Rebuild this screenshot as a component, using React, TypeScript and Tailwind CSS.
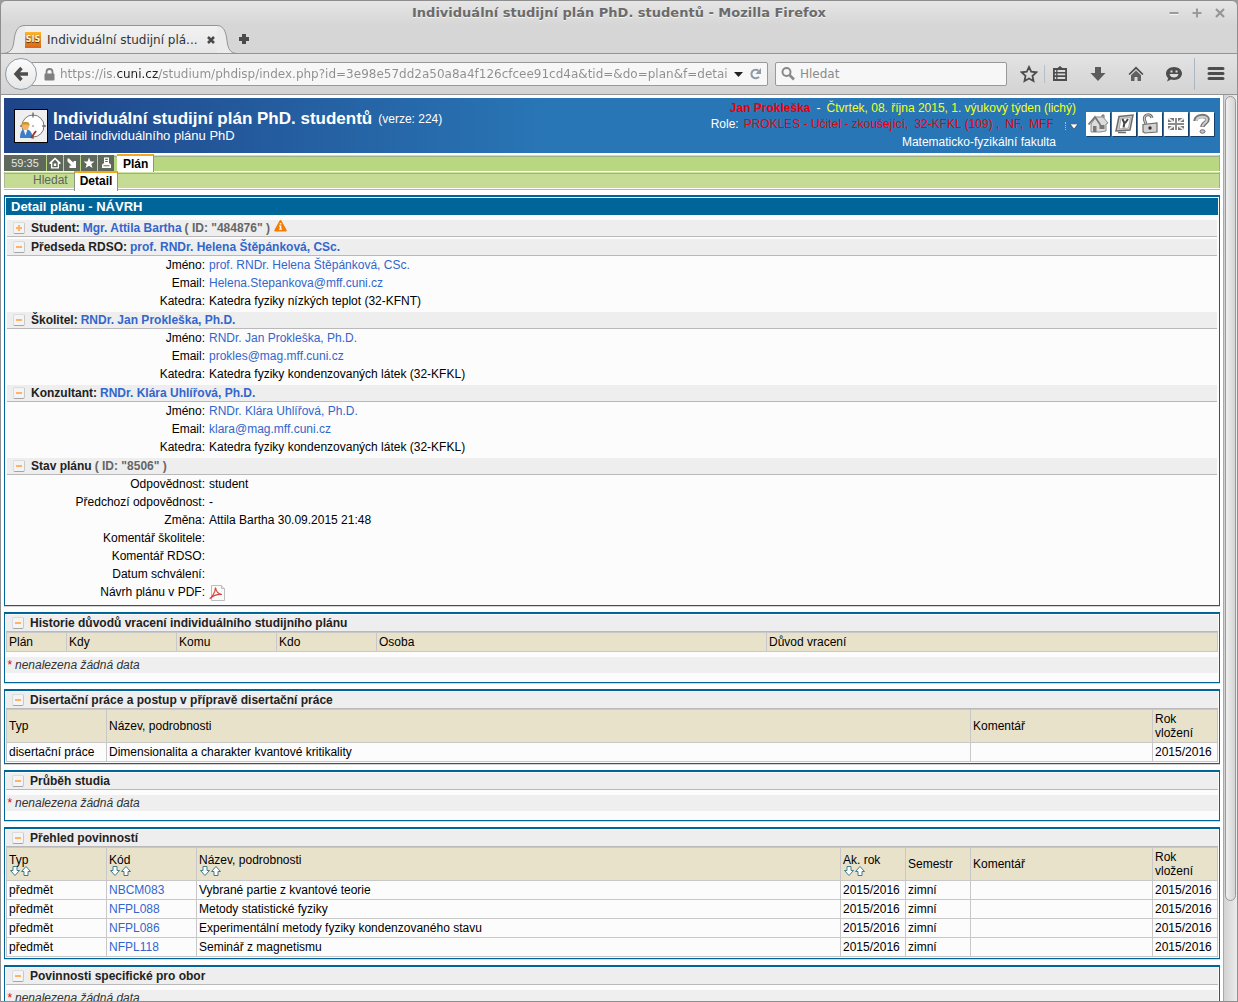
import type { ReactNode } from "react";

type Person = { role: string; name: string; email: string; department: string };

const people: Person[] = [
  { role: "Předseda RDSO:", name: "prof. RNDr. Helena Štěpánková, CSc.", email: "Helena.Stepankova@mff.cuni.cz", department: "Katedra fyziky nízkých teplot (32-KFNT)" },
  { role: "Školitel:", name: "RNDr. Jan Prokleška, Ph.D.", email: "prokles@mag.mff.cuni.cz", department: "Katedra fyziky kondenzovaných látek (32-KFKL)" },
  { role: "Konzultant:", name: "RNDr. Klára Uhlířová, Ph.D.", email: "klara@mag.mff.cuni.cz", department: "Katedra fyziky kondenzovaných látek (32-KFKL)" },
];

const duties = [
  { code: "NBCM083", title: "Vybrané partie z kvantové teorie" },
  { code: "NFPL088", title: "Metody statistické fyziky" },
  { code: "NFPL086", title: "Experimentální metody fyziky kondenzovaného stavu" },
  { code: "NFPL118", title: "Seminář z magnetismu" },
];

const pageUrl = "https://is.cuni.cz/studium/phdisp/index.php?id=3e98e57dd2a50a8a4f126cfcee91cd4a&tid=&do=plan&f=detail";

/* ---------- browser window ---------- */

function TitleBar() {
  return (
    <div className="grid h-6 grid-cols-[1fr_auto_1fr] items-center text-[13px] font-bold text-[#6b6b6b]">
      <span />
      <span className="[text-shadow:0_1px_0_#f4f4f4]">Individuální studijní plán PhD. studentů - Mozilla Firefox</span>
      <div className="flex justify-end gap-[9px] pr-[10px]">
        <button type="button" aria-label="Minimalizovat">
          <svg width="14" height="14" viewBox="0 0 14 14"><path d="M2.5 8h9" stroke="#f5f5f5" strokeWidth="2" /><path d="M2.5 7h9" stroke="#9a9a9a" strokeWidth="2" /></svg>
        </button>
        <button type="button" aria-label="Maximalizovat">
          <svg width="14" height="14" viewBox="0 0 14 14"><path d="M2.5 7h9M7 2.5v9" stroke="#9a9a9a" strokeWidth="2" /></svg>
        </button>
        <button type="button" aria-label="Zavřít okno">
          <svg width="14" height="14" viewBox="0 0 14 14"><path d="M3 3l8 8M11 3l-8 8" stroke="#969696" strokeWidth="2.2" /></svg>
        </button>
      </div>
    </div>
  );
}

function TabStrip() {
  return (
    <div className="flex h-7 items-stretch">
      <svg className="-mb-px h-[29px] shrink-0" width="24" height="29" viewBox="0 0 24 29">
        <path d="M0 28.5C8 28.5 11 26 12.5 19L13.5 12C15 4 18 .5 24 .5V29H0z" fill="#ebebeb" />
        <path d="M0 28.5C8 28.5 11 26 12.5 19L13.5 12C15 4 18 .5 24 .5" fill="none" stroke="#949494" />
      </svg>
      <div className="-mb-px flex w-48 items-center border-t border-[#949494] bg-linear-to-b from-[#f2f2f2] to-[#e6e6e6]">
        <span className="flex size-4 items-center justify-center bg-linear-to-b from-[#fdb42a] to-[#d9641a] text-[8px] font-bold text-[#fff3d0] [text-shadow:0_1px_1px_#5a2a08]">SIS</span>
        <span className="ml-[6px] text-[12px] whitespace-nowrap text-[#2e3436]">Individuální studijní plá...</span>
        <button type="button" aria-label="Zavřít panel" className="mr-px ml-auto">
          <svg width="10" height="10" viewBox="0 0 10 10"><path d="M2 2l6 6M8 2l-6 6" stroke="#4a4a4a" strokeWidth="2.6" /></svg>
        </button>
      </div>
      <svg className="-mb-px h-[29px] shrink-0" width="21" height="29" viewBox="0 0 21 29">
        <path d="M21 28.5C15 28.5 12 26 10.5 19L9.5 12C8 4 5 .5 0 .5V29H21z" fill="#ebebeb" />
        <path d="M21 28.5C15 28.5 12 26 10.5 19L9.5 12C8 4 5 .5 0 .5" fill="none" stroke="#949494" />
      </svg>
      <button type="button" aria-label="Nový panel" className="flex items-center">
        <svg width="12" height="12" viewBox="0 0 12 12"><path d="M4 1h4v3h3v4H8v3H4V8H1V4h3z" fill="#4a4a4a" /></svg>
      </button>
    </div>
  );
}

function NavButton({ label, className, children }: { label: string; className?: string; children: ReactNode }) {
  return (
    <button type="button" aria-label={label} className={`flex items-center justify-center ${className ?? ""}`}>
      <svg width="18" height="18" viewBox="0 0 18 18" fill="#4d4d4d">{children}</svg>
    </button>
  );
}

function NavBar() {
  return (
    <div className="flex h-[42px] items-center border-y border-y-[#949494] bg-linear-to-b from-[#e3e3e3] to-[#d3d3d3] pl-1">
      <button type="button" aria-label="Zpět" className="z-10 flex size-8 shrink-0 items-center justify-center rounded-full border border-[#8f9aa3] bg-linear-to-b from-[#fcfcfc] to-[#e6e6e6]">
        <svg width="16" height="16" viewBox="0 0 16 16"><path d="M8.500 2L3 8l5.500 6M3.500 8H15" fill="none" stroke="#4d4d4d" strokeWidth="3.400" /></svg>
      </button>
      <div className="-ml-2 flex h-6 flex-1 items-center rounded-r-xs border border-[#999] bg-[#f7f7f7] pl-[14px]">
        <svg width="11" height="13" viewBox="0 0 11 13" className="shrink-0"><path d="M2.500 6V4a3 3 0 016 0v2" fill="none" stroke="#808080" strokeWidth="1.800" /><rect x=".5" y="5.500" width="10" height="7" rx="1" fill="#808080" /></svg>
        <input
          type="text"
          aria-label="Adresa"
          defaultValue={pageUrl}
          className="ml-[5px] min-w-0 flex-1 bg-[linear-gradient(to_right,#8e8e8e_56px,#202020_56px,#202020_99px,#8e8e8e_99px)] bg-clip-text text-[12px] text-transparent outline-none"
        />
        <button type="button" aria-label="Historie adres" className="mx-[6px]">
          <svg width="9" height="5" viewBox="0 0 9 5"><path d="M0 0h9L4.500 5z" fill="#222" /></svg>
        </button>
        <button type="button" aria-label="Obnovit" className="mr-1">
          <svg width="14" height="14" viewBox="0 0 14 14"><path d="M10 9.800A4.300 4.300 0 1 1 9.500 3.800" fill="none" stroke="#8f9ba6" strokeWidth="2" /><path d="M12 1v6H6.500z" fill="#8f9ba6" /></svg>
        </button>
      </div>
      <label className="ml-[7px] flex h-6 w-[232px] items-center rounded-xs border border-[#999] bg-[#f7f7f7] pl-1">
        <svg width="16" height="16" viewBox="0 0 16 16"><circle cx="6.500" cy="6" r="4" fill="none" stroke="#8a8a8a" strokeWidth="2" /><path d="M9.500 9l4.500 4.500" stroke="#8a8a8a" strokeWidth="2.600" /></svg>
        <input type="text" aria-label="Vyhledávání" placeholder="Hledat" className="ml-1 min-w-0 flex-1 text-[12px] outline-none placeholder:text-[#8b8b8b]" />
      </label>
      <NavButton label="Přidat záložku" className="ml-[13px]">
        <path d="M9 2l2.200 4.700 5.100.6-3.800 3.500 1 5.200L9 13.500 4.500 16l1-5.200L1.700 7.300l5.100-.6z" fill="none" stroke="#4d4d4d" strokeWidth="1.800" />
      </NavButton>
      <span className="mx-[6px] h-[18px] w-px bg-[#b3bfc9]" />
      <NavButton label="Záložky">
        <path fillRule="evenodd" d="M2 3h4.500L9 1l2.500 2H16v13H2zM3.800 5v2h1.400V5zm2.700 0v2h7.700V5zM3.800 8.500v1.700h1.400V8.500zm2.700 0v1.700h7.700V8.500zM3.800 12v2h1.400v-2zm2.700 0v2h7.700v-2z" />
      </NavButton>
      <NavButton label="Stahování" className="ml-5">
        <path d="M6 2h6v6h4.500L9 16 1.500 8H6z" fill="#5c5c5c" />
      </NavButton>
      <NavButton label="Domů" className="ml-5">
        <path d="M9 1.500L1.500 9l1.200 1L9 4l6.300 6 1.200-1z" />
        <path d="M4 10.300L9 5.600l5 4.700V16h-3.500v-4h-3v4H4z" fill="#606060" />
      </NavButton>
      <NavButton label="Hello" className="ml-5">
        <path d="M9 2c4.300 0 8 2.800 8 6.500S13.300 15 9 15c-1 0-2-.1-3-.4L2 16.500l1.200-3.300C1.800 12 1 10.400 1 8.500 1 4.800 4.700 2 9 2z" />
        <path d="M5.500 5.500h2v2h-2zm5 0h2v2h-2zM4.500 9h9c-.5 2.300-2.300 3.600-4.500 3.600S5 11.300 4.500 9z" fill="#ddd" />
      </NavButton>
      <span className="ml-[11px] h-8 w-px bg-[#aab6c1]" />
      <NavButton label="Nabídka" className="mr-3 ml-3">
        <path d="M2 3.500h14M2 8.500h14M2 13.500h14" stroke="#4d4d4d" strokeWidth="3" strokeLinecap="round" />
      </NavButton>
    </div>
  );
}

/* ---------- application header ---------- */

function HeaderButton({ label, children }: { label: string; children: ReactNode }) {
  return (
    <button type="button" aria-label={label} className="flex size-6 items-center justify-center bg-white shadow-[1px_1px_0_#12406b]">
      <svg width="22" height="22" viewBox="0 0 22 22" fill="#c4c4c4" stroke="#6e6e6e">{children}</svg>
    </button>
  );
}

function AppHeader() {
  return (
    <header className="flex h-[55px] justify-between bg-linear-to-r from-[#1f4488] to-[#2976b6] to-45% pr-1 pl-[10px] text-white">
      <div className="flex pt-[11px]">
        <svg width="34" height="34" viewBox="0 0 34 34" className="shrink-0">
          <rect x=".5" y=".5" width="33" height="33" fill="#efefef" stroke="#000" />
          <circle cx="19" cy="17" r="11" fill="#fff" stroke="#777" />
          <path d="M19 3.500v5M19 26v4M6 17h4M28 17h4" stroke="#444" />
          <path d="M19 16v2M18 17h2" stroke="#aaa" />
          <path d="M6 29c0-6 2-9 5.500-9s7 3 7 9z" fill="#3b7fc4" />
          <path d="M9.500 20.500h4l-2 6z" fill="#f4f4f4" />
          <circle cx="11.500" cy="17" r="3.500" fill="#f4b266" />
          <path d="M7.500 17c-.5-4 2-4 4-4s4.500 0 4 4l-1.500-1.500H9z" fill="#c9962a" />
          <path d="M17 29l5-7" stroke="#a33b2a" strokeWidth="2" />
        </svg>
        <div className="pl-[5px]">
          <div className="flex items-center gap-[6px]">
            <h1 className="text-[17px] leading-5 font-bold">Individuální studijní plán PhD. studentů</h1>
            <span className="text-[12px] leading-5">(verze: 224)</span>
          </div>
          <p className="pl-px text-[13px] leading-[14px]">Detail individuálního plánu PhD</p>
        </div>
      </div>
      <div className="flex gap-[6px]">
        <div className="flex flex-col items-end pt-[2px] text-[12px] leading-4">
          <p className="flex gap-[6px] pr-1">
            <b className="text-[#e8000d]">Jan Prokleška</b>
            <span>-</span>
            <span className="text-[#f2ff1a]">Čtvrtek, 08. října 2015, 1. výukový týden (lichý)</span>
          </p>
          <div className="flex items-center">
            <span>Role:</span>
            <span className="ml-[5px] flex gap-[6px] text-[#e8000d]">
              <span>PROKLES - Učitel - zkoušející,</span>
              <span>32-KFKL (109) ,</span>
              <span>NF,</span>
              <span>MFF</span>
            </span>
            <button type="button" aria-label="Změnit roli" className="ml-[11px] flex items-center gap-1 pt-1 pr-[2px]">
              <span className="h-2 border-l border-dotted border-[#9fc3e2]" />
              <svg width="8" height="5" viewBox="0 0 8 5"><path d="M0 0h8L4 5z" fill="#fff" stroke="#123" strokeWidth=".5" /></svg>
            </button>
          </div>
          <p className="pt-[2px] pr-6">Matematicko-fyzikální fakulta</p>
        </div>
        <div className="flex gap-[2px] pt-[14px] pr-[2px]">
          <HeaderButton label="Hlavní stránka">
            <path d="M4 11l5-7h7l5 6-2 1v7l-6 1H4z" fill="#dcdcdc" stroke="#8a8a8a" />
            <path d="M15 4V2h2v3" fill="#bbb" />
            <path d="M1.500 11.500L8 4l5.500 8" fill="none" stroke="#777" strokeWidth="1.800" />
            <path d="M6 13h3.500v6H6zM12.500 12h5v4h-5z" fill="#777" stroke="none" />
          </HeaderButton>
          <HeaderButton label="Nastavení">
            <path d="M6 3.500L20 2l-3 15-14 1z" fill="#cfcfcf" strokeWidth="1.500" />
            <path d="M8 5.500l9.500-1-2 10.500-9.500 1z" fill="#fff" stroke="#aaa" />
            <path d="M9.500 6l1.500 3.500h1.500L15 6M11.500 9.500l-1 5" fill="none" stroke="#444" strokeWidth="2" />
            <path d="M5 19.500h8" strokeWidth="1.500" />
          </HeaderButton>
          <HeaderButton label="Odhlásit">
            <path d="M7 11L5.500 7C4 1 12 0 13 5" fill="none" stroke="#6e6e6e" strokeWidth="3" />
            <path d="M7 11L5.500 7C4 1 12 0 13 5" fill="none" stroke="#d8d8d8" />
            <path d="M4 11.500L18 10v9l-12 1-2-1z" fill="#d2d2d2" strokeWidth="1.200" />
            <circle cx="11" cy="15" r="1.700" fill="#333" stroke="none" />
          </HeaderButton>
          <HeaderButton label="English">
            <rect x="3" y="5" width="16" height="12" fill="#777" stroke="none" />
            <path d="M3 5l16 12M19 5L3 17" stroke="#e8e8e8" strokeWidth="2" />
            <path d="M11 5v12M3 11h16" stroke="#fff" strokeWidth="4" />
            <path d="M11 5v12M3 11h16" stroke="#8c8c8c" strokeWidth="2" />
          </HeaderButton>
          <HeaderButton label="Nápověda">
            <path d="M4.500 8c0-6 12-6.500 12-1.500 0 3.500-5 3.500-5 7.500" fill="none" stroke="#777" strokeWidth="4.500" />
            <path d="M5.500 8c0-5 10.500-5.500 10.500-1.500 0 3.500-4.500 3.500-4.500 7" fill="none" stroke="#cdcdcd" strokeWidth="2.200" />
            <ellipse cx="11.500" cy="18.500" rx="2.500" ry="1.800" />
          </HeaderButton>
        </div>
      </div>
    </header>
  );
}

function QuickButton({ label, children }: { label: string; children: ReactNode }) {
  return (
    <button type="button" aria-label={label} className="flex size-4 items-center justify-center bg-[#5f695b]">
      <svg width="12" height="12" viewBox="0 0 12 12" fill="#fff">{children}</svg>
    </button>
  );
}

function Menu() {
  return (
    <nav className="text-[12px]">
      <div className="mt-[2px] flex h-4 bg-[#b9d681] shadow-[inset_-1px_0_0_#9db089,inset_0_1px_0_#cfe3a6,inset_0_2px_0_#9db089]">
        <div className="flex gap-px">
          <span className="flex h-4 w-[42px] items-center justify-center bg-[#5f695b] text-[11px] text-[#e6e6e6]">59:35</span>
          <QuickButton label="Domů"><path fillRule="evenodd" d="M6 .5l5.500 5V7H10v4.500H2V7H.500V5.500zM6 2.500L3.300 5.200v5h5.400v-5zM4.800 6.500h2.400v2.400H4.800z" /></QuickButton>
          <QuickButton label="Dolů"><path d="M3 1.500l4.500 4.300V4H10v7H3.500V8.500h2L1.500 4.500V1.500z" /></QuickButton>
          <QuickButton label="Oblíbené"><path d="M6 .5l1.500 4h4L8.300 7l1.200 4L6 8.700 2.500 11l1.200-4L.5 4.500h4z" /></QuickButton>
          <QuickButton label="Tisk"><path fillRule="evenodd" d="M4 .5h5v6h1l1 1.500v3H2V8l1-1.500h1zM5.200 1.700v1.200h2.600V1.700zm0 2.200v1.200h2.600V3.900zM3.500 8.300v1h6v-1z" /></QuickButton>
        </div>
        <a href="#plan" className="-mt-px ml-[3px] flex h-[18px] items-center border-t-2 border-r border-t-[#f5a81c] border-r-[#8b9683] bg-white pr-[5px] pl-[6px] font-bold text-black">Plán</a>
      </div>
      <div className="mt-px flex h-4 bg-[#c6dc95] pl-[23px] shadow-[inset_1px_0_0_#a9bd94,inset_-1px_0_0_#9db089,inset_0_1px_0_#cfe3a6,inset_0_2px_0_#9db089]">
        <a href="#hledat" className="flex h-4 items-center px-[6px] text-[#5d665a]">Hledat</a>
        <a href="#detail" className="-mt-px h-5 border-x border-t-2 border-x-[#8b9683] border-t-[#f5a81c] bg-white px-[5px] leading-4 font-bold text-black">Detail</a>
      </div>
      <div className="mt-px h-px bg-[#b5b5b5]" />
    </nav>
  );
}

/* ---------- content panels ---------- */

function Toggle({ closed = false }: { closed?: boolean }) {
  return (
    <button type="button" aria-label={closed ? "Rozbalit" : "Sbalit"} aria-expanded={!closed} className="size-3 shrink-0 rounded-xs border border-[#dcdcdc] border-r-[#c8c8c8] border-b-[#a5a5a5] bg-[#f4f4f4]">
      <svg width="10" height="10" viewBox="0 0 10 10" fill="#ffb366">
        <path d="M2 4h6v2H2z" />
        {closed && <path d="M4 2h2v6H4z" />}
      </svg>
    </button>
  );
}

function Heading({ children, closed }: { children: ReactNode; closed?: boolean }) {
  return (
    <h3 className="flex h-[17px] items-center gap-[6px] border-b border-[#b9b9bc] bg-[#eeeeee] pl-[6px] text-[12px] leading-4 font-bold text-[#222]">
      <Toggle closed={closed} />
      <span className="flex items-center gap-[3px]">{children}</span>
    </h3>
  );
}

function Fields({ rows }: { rows: [string, ReactNode][] }) {
  return (
    <dl className="grid grid-cols-[198px_1fr] gap-x-1 leading-[18px]">
      {rows.map(([label, value]) => (
        <div key={label} className="contents">
          <dt className="h-[18px] text-right">{label}</dt>
          <dd className="h-[18px]">{value}</dd>
        </div>
      ))}
    </dl>
  );
}

function Link({ to, children }: { to: string; children: ReactNode }) {
  return <a href={to} className="text-[#3366cc]">{children}</a>;
}

function PdfIcon() {
  return (
    <svg width="16" height="18" viewBox="0 -2 16 18" role="img" aria-label="PDF">
      <path d="M2.500.5h10l3 3v12h-13z" fill="#fafafa" stroke="#bdbdbd" />
      <path d="M12.500.5v3h3" fill="#e4e4e4" stroke="#bdbdbd" />
      <path d="M.5 13.500C3 12.500 6.500 7 6.500 2.500c.5 4 3 6.500 6.500 7-4-.5-8 .5-12 4" fill="none" stroke="#d9443a" strokeWidth="1.200" />
    </svg>
  );
}

function DetailPanel() {
  return (
    <section className="border border-t-2 border-[#006699] bg-[#fcfcfc] px-px pt-px pb-1 shadow-[0_1px_0_#d5d5d5]">
      <h2 className="h-[17px] bg-[#006699] pl-[5px] text-[13px] leading-[17px] font-bold text-white">Detail plánu - NÁVRH</h2>
      <div className="px-px pt-[5px]">
        <Heading closed>
          <span>Student:</span>
          <Link to="#student">Mgr. Attila Bartha</Link>
          <span className="text-[#666]">( ID: "484876" )</span>
          <svg width="13" height="12" viewBox="0 0 13 12" className="ml-px self-start"><path d="M5.500.8c.5-1 1.500-1 2 0l5 9c.5 1 0 1.700-1 1.700h-10c-1 0-1.500-.7-1-1.700z" fill="#f57c00" /><path d="M5.800 3h1.500v1.500H5.800zM5 5.500h2.300v3.200H8v1H5v-1h.8V6.500H5z" fill="#fff" /></svg>
        </Heading>
        {people.map((person) => (
          <div key={person.role} className="mt-[2px]">
            <Heading>
              <span>{person.role}</span>
              <Link to="#osoba">{person.name}</Link>
            </Heading>
            <Fields
              rows={[
                ["Jméno:", <Link to="#osoba">{person.name}</Link>],
                ["Email:", <Link to="#email">{person.email}</Link>],
                ["Katedra:", person.department],
              ]}
            />
          </div>
        ))}
        <div className="mt-[2px]">
          <Heading>
            <span>Stav plánu</span>
            <span className="text-[#666]">( ID: "8506" )</span>
          </Heading>
          <Fields
            rows={[
              ["Odpovědnost:", "student"],
              ["Předchozí odpovědnost:", "-"],
              ["Změna:", "Attila Bartha 30.09.2015 21:48"],
              ["Komentář školitele:", ""],
              ["Komentář RDSO:", ""],
              ["Datum schválení:", ""],
              ["Návrh plánu v PDF:", <a href="#pdf"><PdfIcon /></a>],
            ]}
          />
        </div>
      </div>
    </section>
  );
}

function Panel({ title, children }: { title: string; children: ReactNode }) {
  return (
    <section className="mt-[6px] border border-t-2 border-[#006699] bg-[#fcfcfc] px-px pt-px shadow-[0_1px_0_#d5d5d5]">
      <Heading>{title}</Heading>
      {children}
    </section>
  );
}

function NoData() {
  return (
    <p className="mt-[5px] mb-[9px] h-4 bg-[#efefef] pl-px leading-4 text-[#333] italic">
      <span className="text-[#e00]">*</span> nenalezena žádná data
    </p>
  );
}

function SortArrows() {
  return (
    <span className="-mt-px flex h-[9px] gap-px pl-px">
      <button type="button" aria-label="Řadit sestupně">
        <svg width="10" height="10" viewBox="0 0 10 10"><path d="M3 .5h4v4h2.500L5 9.500.5 4.500H3z" fill="#fff" stroke="#3f7c8c" /></svg>
      </button>
      <button type="button" aria-label="Řadit vzestupně">
        <svg width="10" height="10" viewBox="0 0 10 10"><path d="M3 9.500h4v-4h2.500L5 .5.500 5.500H3z" fill="#fff" stroke="#3f7c8c" /></svg>
      </button>
    </span>
  );
}

function DataTable({ children }: { children: ReactNode }) {
  return (
    <table className="w-full table-fixed border-collapse text-left leading-[14px] [&_td]:h-[19px] [&_td]:border [&_td]:border-[#c8c8c8] [&_td]:px-[2px] [&_th]:border [&_th]:border-[#c8c8c8] [&_th]:bg-[#e8e2cb] [&_th]:px-[2px] [&_th]:font-normal">
      {children}
    </table>
  );
}

export default function App() {
  return (
    <div className="h-screen bg-[#9a9a9a]">
      <div className="flex h-full flex-col overflow-hidden rounded-t-md border border-[#8e8e8e] bg-[#d6d6d6] bg-linear-to-b from-[#e6e6e6] to-[#d6d6d6] to-[24px] font-['DejaVu_Sans',sans-serif]">
        <TitleBar />
        <TabStrip />
        <NavBar />
        <div className="flex min-h-0 flex-1 bg-white font-['Liberation_Sans',Arial,sans-serif]">
          <main className="min-w-0 flex-1 overflow-hidden px-[3px] pt-[3px] text-[12px] text-black">
            <AppHeader />
            <Menu />
            <div className="mt-[5px]">
              <DetailPanel />
              <Panel title="Historie důvodů vracení individuálního studijního plánu">
                <DataTable>
                  <thead>
                    <tr className="h-[19px]">
                      <th className="w-[60px]">Plán</th>
                      <th className="w-[110px]">Kdy</th>
                      <th className="w-[100px]">Komu</th>
                      <th className="w-[100px]">Kdo</th>
                      <th className="w-[390px]">Osoba</th>
                      <th>Důvod vracení</th>
                    </tr>
                  </thead>
                </DataTable>
                <NoData />
              </Panel>
              <Panel title="Disertační práce a postup v přípravě disertační práce">
                <div className="pb-px">
                  <DataTable>
                    <thead>
                      <tr className="h-[33px]">
                        <th className="w-[100px]">Typ</th>
                        <th>Název, podrobnosti</th>
                        <th className="w-[182px]">Komentář</th>
                        <th className="w-[65px]">Rok vložení</th>
                      </tr>
                    </thead>
                    <tbody>
                      <tr>
                        <td>disertační práce</td>
                        <td>Dimensionalita a charakter kvantové kritikality</td>
                        <td />
                        <td>2015/2016</td>
                      </tr>
                    </tbody>
                  </DataTable>
                </div>
              </Panel>
              <Panel title="Průběh studia">
                <NoData />
              </Panel>
              <Panel title="Přehled povinností">
                <div className="pb-px">
                  <DataTable>
                    <thead>
                      <tr className="h-[33px]">
                        <th className="w-[100px]">Typ<SortArrows /></th>
                        <th className="w-[90px]">Kód<SortArrows /></th>
                        <th>Název, podrobnosti<SortArrows /></th>
                        <th className="w-[65px]">Ak. rok<SortArrows /></th>
                        <th className="w-[65px]">Semestr</th>
                        <th className="w-[182px]">Komentář</th>
                        <th className="w-[65px]">Rok vložení</th>
                      </tr>
                    </thead>
                    <tbody>
                      {duties.map((duty) => (
                        <tr key={duty.code}>
                          <td>předmět</td>
                          <td><Link to="#predmet">{duty.code}</Link></td>
                          <td>{duty.title}</td>
                          <td>2015/2016</td>
                          <td>zimní</td>
                          <td />
                          <td>2015/2016</td>
                        </tr>
                      ))}
                    </tbody>
                  </DataTable>
                </div>
              </Panel>
              <Panel title="Povinnosti specifické pro obor">
                <NoData />
              </Panel>
            </div>
          </main>
          <div className="w-[14px] shrink-0 border-l border-[#a9a9a9] bg-linear-to-r from-[#d2d2d2] to-[#ececec] px-px pt-px">
            <div className="h-[89%] rounded-full border border-[#999] bg-linear-to-r from-[#efefef] to-[#d4d4d4]" />
          </div>
        </div>
      </div>
    </div>
  );
}
